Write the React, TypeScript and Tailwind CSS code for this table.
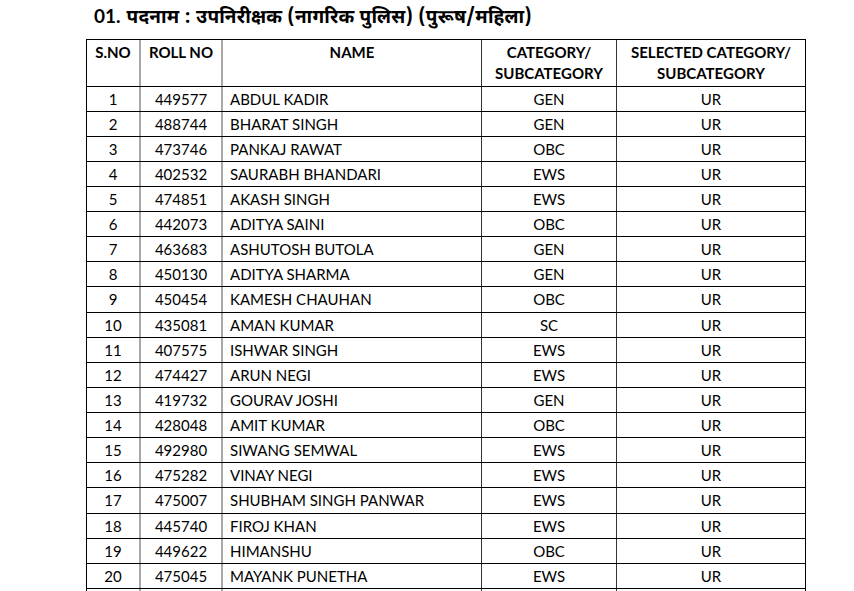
import React from "react";

const rows: [string, string, string, string][] = [
  ["449577", "ABDUL KADIR", "GEN", "UR"],
  ["488744", "BHARAT SINGH", "GEN", "UR"],
  ["473746", "PANKAJ RAWAT", "OBC", "UR"],
  ["402532", "SAURABH BHANDARI", "EWS", "UR"],
  ["474851", "AKASH SINGH", "EWS", "UR"],
  ["442073", "ADITYA SAINI", "OBC", "UR"],
  ["463683", "ASHUTOSH BUTOLA", "GEN", "UR"],
  ["450130", "ADITYA SHARMA", "GEN", "UR"],
  ["450454", "KAMESH CHAUHAN", "OBC", "UR"],
  ["435081", "AMAN KUMAR", "SC", "UR"],
  ["407575", "ISHWAR SINGH", "EWS", "UR"],
  ["474427", "ARUN NEGI", "EWS", "UR"],
  ["419732", "GOURAV JOSHI", "GEN", "UR"],
  ["428048", "AMIT KUMAR", "OBC", "UR"],
  ["492980", "SIWANG SEMWAL", "EWS", "UR"],
  ["475282", "VINAY NEGI", "EWS", "UR"],
  ["475007", "SHUBHAM SINGH PANWAR", "EWS", "UR"],
  ["445740", "FIROJ KHAN", "EWS", "UR"],
  ["449622", "HIMANSHU", "OBC", "UR"],
  ["475045", "MAYANK PUNETHA", "EWS", "UR"],
];

export default function App() {
  return (
    <div
      className="w-[854px] h-[591px] bg-white overflow-hidden text-black"
      style={{ fontFamily: "Lato, 'Open Sans', sans-serif" }}
    >
      <div className="h-[39px] pl-[94px] pt-[1px] flex items-baseline">
        <span className="text-[19px] font-bold leading-[30px]" style={{ fontFamily: "Lato, sans-serif" }}>
          01.
        </span>
        <span
          className="text-[19px] font-bold leading-[30px] ml-[6px] tracking-[0.2px]"
          style={{ fontFamily: "'Noto Sans Devanagari', 'Noto Sans', 'Lohit Devanagari', sans-serif" }}
        >
          पदनाम : उपनिरीक्षक (नागरिक पुलिस) (पुरूष/महिला)
        </span>
      </div>
      <div className="ml-[86px] w-[720px] border border-black border-b-0">
        <div className="flex h-[47px] border-b border-black font-bold text-[15px] leading-[21px]">
          <div className="w-[54px] shrink-0 border-r-2 border-[#a8a8a8] text-center pt-[2px]">S.NO</div>
          <div className="w-[82px] shrink-0 border-r-2 border-[#a8a8a8] text-center pt-[2px]">ROLL NO</div>
          <div className="w-[259px] shrink-0 border-r border-[#333] text-center pt-[2px]">NAME</div>
          <div className="w-[135px] shrink-0 border-r border-[#333] text-center pt-[2px]">
            CATEGORY/
            <br />
            SUBCATEGORY
          </div>
          <div className="flex-1 text-center pt-[2px]">
            SELECTED CATEGORY/
            <br />
            SUBCATEGORY
          </div>
        </div>
        {rows.map((r, i) => (
          <div
            key={i}
            className={`flex border-b border-black text-[15px] ${i === 8 || i === 16 ? "h-[26px]" : "h-[25px]"}`}
          >
            <div className="w-[54px] shrink-0 border-r-2 border-[#a8a8a8] flex items-center justify-center">{i + 1}</div>
            <div className="w-[82px] shrink-0 border-r-2 border-[#a8a8a8] flex items-center justify-center">{r[0]}</div>
            <div className="w-[259px] shrink-0 border-r border-[#333] flex items-center pl-[7px]">{r[1]}</div>
            <div className="w-[135px] shrink-0 border-r border-[#333] flex items-center justify-center">{r[2]}</div>
            <div className="flex-1 flex items-center justify-center">{r[3]}</div>
          </div>
        ))}
        <div className="flex h-[10px]">
          <div className="w-[54px] shrink-0 border-r-2 border-[#a8a8a8]" />
          <div className="w-[82px] shrink-0 border-r-2 border-[#a8a8a8]" />
          <div className="w-[259px] shrink-0 border-r border-[#333]" />
          <div className="w-[135px] shrink-0 border-r border-[#333]" />
          <div className="flex-1" />
        </div>
      </div>
    </div>
  );
}
